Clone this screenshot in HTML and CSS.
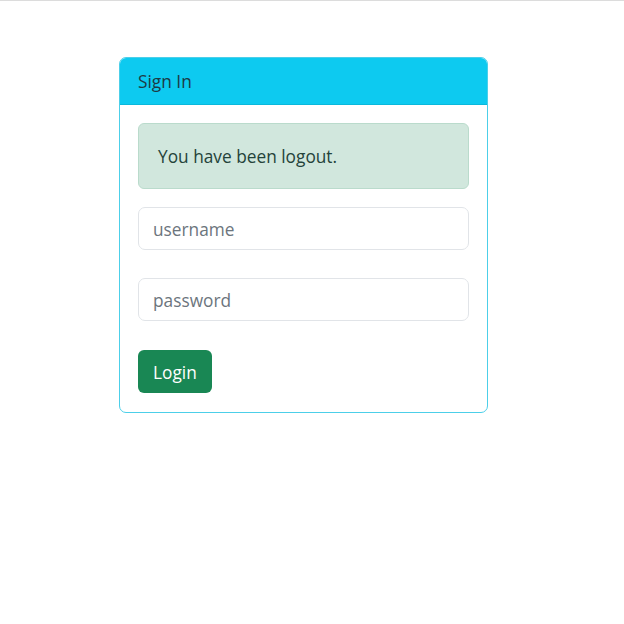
FILE: index.html
```html
<!DOCTYPE html>
<html>
<head>
<meta charset="utf-8">
<link rel="stylesheet" href="styles.css">
</head>
<body>
<div class="topline"></div>
<div class="card">
  <div class="card-header">Sign In</div>
  <div class="card-body">
    <div class="alert">You have been logout.</div>
    <form class="form">
      <input class="field" type="text" placeholder="username">
      <input class="field" type="password" placeholder="password">
      <div><button class="btn" type="button">Login</button></div>
    </form>
  </div>
</div>
</body>
</html>
```
FILE: styles.css
```css
* { box-sizing: border-box; }
body {
  margin: 0;
  font-family: "Open Sans", "Noto Sans", sans-serif;
  font-size: 17.3px;
  line-height: 27px;
  color: #212529;
  background: #fff;
}
.topline { height: 1px; background: #dcdcdc; }
.card {
  margin: 56px 0 0 119px;
  width: 369px;
  border: 1px solid #4ccfe9;
  border-radius: 7px;
  overflow: hidden;
}
.card-header {
  background: #0dcaf0;
  padding: 10px 18px 9px;
  border-bottom: 1px solid #0ab8db;
  color: #1d3a44;
}
.card-body { padding: 18px; }
.alert {
  background: #d1e7dd;
  border: 1px solid #badbcc;
  border-radius: 6px;
  color: #24433a;
  padding: 19px 18px 17px 19px;
  height: 66px;
  margin-bottom: 18px;
}
.form { display: flex; flex-direction: column; gap: 28px; }
.field {
  display: block;
  width: 100%;
  height: 43px;
  border: 1px solid #e1e4e8;
  border-radius: 7px;
  padding: 1px 14px 0;
  font: inherit;
  color: #212529;
  outline: none;
}
.field::placeholder { color: #6c757d; }
.btn {
  background: #198754;
  color: #fff;
  border: 0;
  border-radius: 6px;
  height: 43px;
  padding: 1px 15px 0;
  font: inherit;
  cursor: pointer;
  margin: 1px 0 1px;
}
```
